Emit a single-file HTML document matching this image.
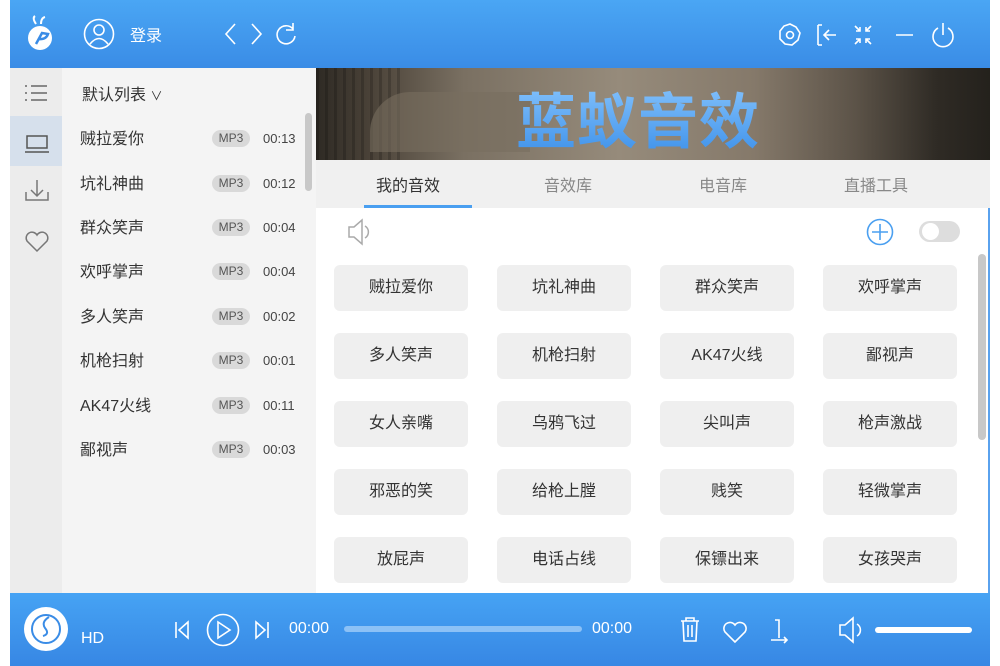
<!DOCTYPE html>
<html><head><meta charset="utf-8"><style>
*{margin:0;padding:0;box-sizing:border-box}
body{width:1000px;height:666px;background:#fff;position:relative;overflow:hidden;font-family:"Liberation Sans","Noto Sans CJK SC",sans-serif}
.a{position:absolute}
.top{left:10px;top:0;width:980px;height:68px;background:linear-gradient(#4aa6f4,#3a8ce6)}
.bot{left:10px;top:593px;width:980px;height:73px;background:linear-gradient(#46a3f4,#3787e4)}
.side{left:10px;top:68px;width:52px;height:525px;background:#ececec}
.list{left:62px;top:68px;width:254px;height:525px;background:#f4f4f4}
.row{position:absolute;left:18px;width:220px;height:20px;font-size:16px;color:#333}
.row .t{position:absolute;left:0;top:-3px}
.row .m{position:absolute;left:132px;top:2px;width:38px;height:17px;border-radius:9px;background:#d9d9d9;font-size:12px;color:#555;text-align:center;line-height:17px}
.row .d{position:absolute;left:183px;top:3px;font-size:13px;color:#444}
.banner{left:316px;top:68px;width:674px;height:92px;background:linear-gradient(90deg,#2e2a24 0%,#4a4238 8%,#7a7062 22%,#968b7b 45%,#85796a 65%,#5c5348 80%,#2f2b25 92%,#24211c 100%)}
.tabs{left:316px;top:160px;width:674px;height:48px;background:#f0f0f0}
.tab{position:absolute;top:12px;font-size:16px;color:#888}
.content{left:316px;top:208px;width:674px;height:385px;background:#fff;border-right:2px solid #5aa2ee}
.btn{position:absolute;width:134px;height:46px;background:#efefef;border-radius:6px;font-size:16px;color:#333;text-align:center;line-height:46px}
.w{stroke:#fff;fill:none;stroke-width:1.6}
</style></head><body>
<div class="a top"></div>
<svg class="a" style="left:24px;top:14px" width="34" height="40" viewBox="0 0 34 40"><path d="M12 10 Q8 4 11 2 M17 10 Q17 4 21 3" stroke="#fff" stroke-width="2" fill="none"/><circle cx="16" cy="24" r="12" fill="#fff"/><path d="M12 30 L18 19 L24 20 Q22 26 14 25" stroke="#3a8ce6" stroke-width="2.5" fill="none"/></svg>
<svg class="a" style="left:83px;top:18px" width="32" height="32"><circle cx="16" cy="16" r="14.5" class="w"/><circle cx="16" cy="12" r="5" class="w"/><path d="M7 26 Q16 15 25 26" class="w"/></svg>
<div class="a" style="left:130px;top:22px;font-size:16px;color:#fff">登录</div>
<svg class="a" style="left:220px;top:20px" width="80" height="28"><path d="M15 4 L6 14 L15 24 M32 4 L41 14 L32 24" class="w" stroke-width="2"/><path d="M73 9 A9 9 0 1 0 75 16 M73 3 L73 10 L66 10" class="w" stroke-width="2"/></svg>
<svg class="a" style="left:775px;top:20px" width="185" height="30"><path d="M15 4 L21 7 L25 13 L23 20 L17 25 L10 24 L5 19 L5 11 L9 6 Z" class="w"/><circle cx="15" cy="15" r="3.5" class="w"/><path d="M43 5 L43 25 M43 5 L47 5 M43 25 L47 25 M61 15 L49 15 M54 10 L49 15 L54 20" class="w"/><path d="M80 6 L85 11 M85 7 L85 11 L81 11 M96 6 L91 11 M91 7 L91 11 L95 11 M80 24 L85 19 M85 23 L85 19 L81 19 M96 24 L91 19 M91 23 L91 19 L95 19" class="w"/><path d="M121 15 L138 15" class="w"/><path d="M163 8 A10 10 0 1 0 173 8 M168 3 L168 15" class="w"/></svg>

<div class="a side"></div>
<div class="a" style="left:10px;top:116px;width:52px;height:50px;background:#d6e0ec"></div>
<svg class="a" style="left:22px;top:80px" width="30" height="180"><path d="M3 6h2M3 13h2M3 20h2M9 6h16M9 13h16M9 20h16" stroke="#666" stroke-width="1.5"/><path d="M5 56h20v12H5zM3 72h24" stroke="#555" stroke-width="1.5" fill="none"/><path d="M15 100v16M9 110l6 6 6-6M4 112v8h22v-8" stroke="#777" stroke-width="1.5" fill="none"/><path d="M15 171 L5 161 A5 5 0 0 1 15 155 A5 5 0 0 1 25 161 Z" stroke="#777" stroke-width="1.5" fill="none"/></svg>

<div class="a list">
<div class="a" style="left:20px;top:13px;font-size:16px;color:#333">默认列表 <span style="font-size:12px">∨</span></div>
<div class="a" style="left:243px;top:45px;width:7px;height:78px;background:#c8c8c8;border-radius:4px"></div>
<div class="row" style="top:60px"><span class="t">贼拉爱你</span><span class="m">MP3</span><span class="d">00:13</span></div>
<div class="row" style="top:105px"><span class="t">坑礼神曲</span><span class="m">MP3</span><span class="d">00:12</span></div>
<div class="row" style="top:149px"><span class="t">群众笑声</span><span class="m">MP3</span><span class="d">00:04</span></div>
<div class="row" style="top:193px"><span class="t">欢呼掌声</span><span class="m">MP3</span><span class="d">00:04</span></div>
<div class="row" style="top:238px"><span class="t">多人笑声</span><span class="m">MP3</span><span class="d">00:02</span></div>
<div class="row" style="top:282px"><span class="t">机枪扫射</span><span class="m">MP3</span><span class="d">00:01</span></div>
<div class="row" style="top:327px"><span class="t">AK47火线</span><span class="m">MP3</span><span class="d">00:11</span></div>
<div class="row" style="top:371px"><span class="t">鄙视声</span><span class="m">MP3</span><span class="d">00:03</span></div>
</div>

<div class="a banner"></div>
<div class="a" style="left:316px;top:68px;width:674px;height:92px;background:repeating-linear-gradient(90deg,rgba(0,0,0,.18) 0 3px,transparent 3px 9px) 0 0/90px 100% no-repeat"></div>
<div class="a" style="left:370px;top:92px;width:160px;height:60px;border-radius:40px 0 0 0;background:rgba(120,110,95,.6)"></div>
<div class="a" style="left:516px;top:74px;font-size:60px;font-weight:bold;color:#5aaaf2;letter-spacing:1px;background:linear-gradient(#8cc8ff,#3a8ee8);-webkit-background-clip:text;-webkit-text-fill-color:transparent">蓝蚁音效</div>

<div class="a tabs">
<div class="tab" style="left:60px;color:#333">我的音效</div>
<div class="tab" style="left:228px">音效库</div>
<div class="tab" style="left:383px">电音库</div>
<div class="tab" style="left:528px">直播工具</div>
<div class="a" style="left:48px;top:45px;width:108px;height:3px;background:#4a9ff0"></div>
</div>

<div class="a content">
<svg class="a" style="left:30px;top:10px" width="30" height="28"><path d="M3 9h5l8-7v24l-8-7H3z" stroke="#aaa" stroke-width="1.5" fill="none"/><path d="M19 8a7 7 0 0 1 0 12" stroke="#aaa" stroke-width="1.5" fill="none"/></svg>
<svg class="a" style="left:549px;top:9px" width="30" height="30"><circle cx="15" cy="15" r="12.5" stroke="#4a9ff0" stroke-width="1.6" fill="none"/><path d="M15 7v16M7 15h16" stroke="#4a9ff0" stroke-width="1.6"/></svg>
<div class="a" style="left:603px;top:13px;width:41px;height:21px;border-radius:11px;background:#ddd"></div>
<div class="a" style="left:606px;top:15px;width:17px;height:17px;border-radius:50%;background:#fff"></div>
<div class="a" style="left:662px;top:46px;width:8px;height:186px;border-radius:4px;background:#c8c8c8"></div>
<div class="btn" style="left:18px;top:57px">贼拉爱你</div><div class="btn" style="left:181px;top:57px">坑礼神曲</div><div class="btn" style="left:344px;top:57px">群众笑声</div><div class="btn" style="left:507px;top:57px">欢呼掌声</div>
<div class="btn" style="left:18px;top:125px">多人笑声</div><div class="btn" style="left:181px;top:125px">机枪扫射</div><div class="btn" style="left:344px;top:125px">AK47火线</div><div class="btn" style="left:507px;top:125px">鄙视声</div>
<div class="btn" style="left:18px;top:193px">女人亲嘴</div><div class="btn" style="left:181px;top:193px">乌鸦飞过</div><div class="btn" style="left:344px;top:193px">尖叫声</div><div class="btn" style="left:507px;top:193px">枪声激战</div>
<div class="btn" style="left:18px;top:261px">邪恶的笑</div><div class="btn" style="left:181px;top:261px">给枪上膛</div><div class="btn" style="left:344px;top:261px">贱笑</div><div class="btn" style="left:507px;top:261px">轻微掌声</div>
<div class="btn" style="left:18px;top:329px">放屁声</div><div class="btn" style="left:181px;top:329px">电话占线</div><div class="btn" style="left:344px;top:329px">保镖出来</div><div class="btn" style="left:507px;top:329px">女孩哭声</div>
</div>

<div class="a bot"></div>
<svg class="a" style="left:23px;top:606px" width="46" height="46"><circle cx="23" cy="23" r="22" fill="#fff"/><circle cx="23" cy="23" r="14" stroke="#3a8ce6" stroke-width="2" fill="none"/><path d="M26 11 Q18 16 22 22 Q27 28 20 30" stroke="#3a8ce6" stroke-width="2" fill="none"/></svg>
<div class="a" style="left:81px;top:630px;font-size:16px;color:#fff">HD</div>
<svg class="a" style="left:172px;top:612px" width="105" height="36"><path d="M4 10v16M16 10L7 18l9 8z" class="w"/><circle cx="51" cy="18" r="15.5" class="w"/><path d="M46 10l12 8-12 8z" class="w"/><path d="M84 10l9 8-9 8zM96 10v16" class="w"/></svg>
<div class="a" style="left:289px;top:620px;font-size:16px;color:#fff">00:00</div>
<div class="a" style="left:344px;top:626px;width:238px;height:6px;border-radius:3px;background:#8cc1f6"></div>
<div class="a" style="left:592px;top:620px;font-size:16px;color:#fff">00:00</div>
<svg class="a" style="left:675px;top:614px" width="130" height="32"><path d="M6 7h18M11 7V4h8v3M8 7l1 20h12l1-20M13 11v12M17 11v12" class="w"/><path d="M60 28 L50 18 A5.5 5.5 0 0 1 60 11 A5.5 5.5 0 0 1 70 18 Z" class="w"/><path d="M100 6h4v18M96 26h16M109 23l3 3-3 3" class="w"/></svg>
<svg class="a" style="left:836px;top:614px" width="32" height="32"><path d="M4 11h5l8-7v24l-8-7H4z" class="w"/><path d="M21 10a7 7 0 0 1 0 12" class="w"/></svg>
<div class="a" style="left:875px;top:627px;width:97px;height:6px;border-radius:3px;background:#fff"></div>
</body></html>
